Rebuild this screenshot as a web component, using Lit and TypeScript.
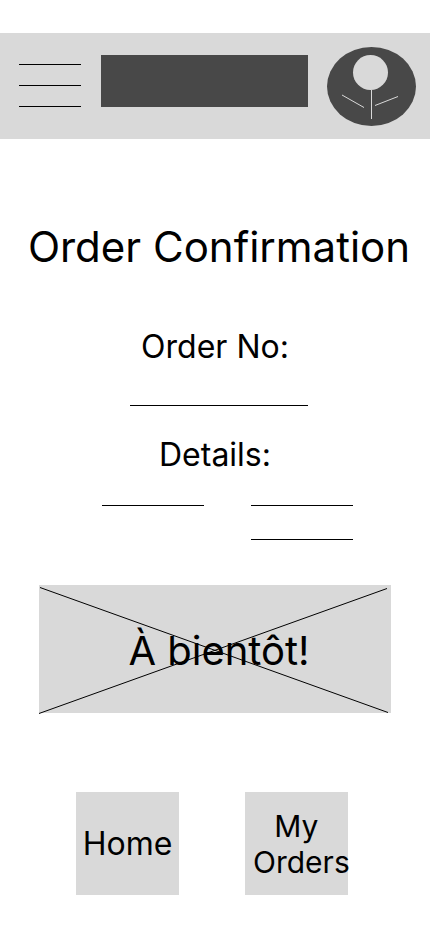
import { LitElement, html, css } from "lit";
import { customElement } from "lit/decorators.js";

@customElement("app-header")
class AppHeader extends LitElement {
  static styles = css`
    :host {
      display: block;
    }
    .bar {
      display: flex;
      align-items: center;
      height: 106px;
      padding: 0 14px 0 19px;
      box-sizing: border-box;
      background: #d9d9d9;
    }
    button {
      border: 0;
      padding: 0;
      background: none;
      cursor: pointer;
    }
    .menu {
      flex: none;
      display: flex;
      flex-direction: column;
      gap: 20px;
      width: 62px;
      margin-right: 20px;
      padding-bottom: 2px;
    }
    .rule {
      display: block;
      width: 100%;
      height: 1px;
      background: #000;
    }
    .search {
      flex: 1;
      min-width: 0;
      height: 52px;
      margin: 0 19px 10px 0;
      padding: 0 12px;
      box-sizing: border-box;
      border: 0;
      border-radius: 0;
      background: #484848;
      color: #fff;
      font: 20px Inter, sans-serif;
    }
    .logo {
      flex: none;
      display: block;
      width: 89px;
      height: 79px;
    }
    .logo svg {
      display: block;
    }
  `;

  render() {
    return html`
      <header class="bar">
        <button class="menu" aria-label="Menu">
          <span class="rule"></span>
          <span class="rule"></span>
          <span class="rule"></span>
        </button>
        <input class="search" type="text" aria-label="Search" />
        <a class="logo" href="#" aria-label="Flower shop">
          <svg width="89" height="79" viewBox="0 0 89 79" aria-hidden="true">
            <ellipse cx="44.5" cy="39.5" rx="44.5" ry="39.5" fill="#484848" />
            <circle cx="43.5" cy="25.5" r="17.5" fill="#d9d9d9" />
            <path
              d="M44.5 43V72M15 48L37 60.5M48 58.5L71 49.5"
              stroke="#d9d9d9"
              fill="none"
            />
          </svg>
        </a>
      </header>
    `;
  }
}

@customElement("app-root")
class AppRoot extends LitElement {
  static styles = css`
    :host {
      display: block;
      min-height: 100vh;
      padding-top: 33px;
      box-sizing: border-box;
      background: #fff;
      color: #000;
      font-family: Inter, sans-serif;
    }
    main {
      display: flex;
      flex-direction: column;
      align-items: center;
      padding: 82px 0 36px;
    }
    h1,
    h2,
    p {
      margin: 0;
      font-weight: 400;
      text-align: center;
    }
    h1 {
      padding-left: 8px;
      font-size: 42px;
      line-height: 52px;
      white-space: nowrap;
    }
    h2 {
      font-size: 32px;
      line-height: 40px;
    }
    .number {
      margin-top: 54px;
    }
    .blank {
      display: block;
      width: 102px;
      height: 1px;
      background: #000;
    }
    .number-line {
      padding: 38px 0 29px 8px;
    }
    .number-line .blank {
      width: 178px;
    }
    .details {
      display: flex;
      align-items: flex-start;
      gap: 47px;
      padding: 30px 0 45px 25px;
    }
    .column {
      display: flex;
      flex-direction: column;
      gap: 33px;
    }
    .banner {
      position: relative;
      display: flex;
      align-items: center;
      justify-content: center;
      align-self: stretch;
      height: 128px;
      margin: 0 39px;
      padding: 4px 0 0 8px;
      box-sizing: border-box;
      background: #d9d9d9;
      font-size: 40px;
      line-height: 48px;
    }
    .cross {
      position: absolute;
      inset: 0;
      width: 100%;
      height: 100%;
      overflow: visible;
    }
    .actions {
      display: flex;
      gap: 66px;
      padding: 79px 6px 0 0;
    }
    .action {
      width: 103px;
      height: 103px;
      padding: 0;
      border: 0;
      border-radius: 0;
      background: #d9d9d9;
      color: #000;
      font: 32px/40px Inter, sans-serif;
      cursor: pointer;
    }
    .stacked {
      padding-left: 8px;
      font-size: 30px;
      line-height: 36px;
      white-space: nowrap;
    }
  `;

  render() {
    return html`
      <app-header></app-header>
      <main>
        <h1>Order Confirmation</h1>
        <h2 class="number">Order No:</h2>
        <div class="number-line"><span class="blank"></span></div>
        <h2>Details:</h2>
        <div class="details">
          <div class="column"><span class="blank"></span></div>
          <div class="column">
            <span class="blank"></span>
            <span class="blank"></span>
          </div>
        </div>
        <div class="banner">
          <svg
            class="cross"
            viewBox="0 0 352 128"
            preserveAspectRatio="none"
            aria-hidden="true"
          >
            <path
              d="M1 2.5L349 127.5M0 128.5L348 3.5"
              stroke="#000"
              fill="none"
            />
          </svg>
          <p>À bientôt!</p>
        </div>
        <nav class="actions">
          <button class="action">Home</button>
          <button class="action stacked">My&nbsp;<br />Orders</button>
        </nav>
      </main>
    `;
  }
}
